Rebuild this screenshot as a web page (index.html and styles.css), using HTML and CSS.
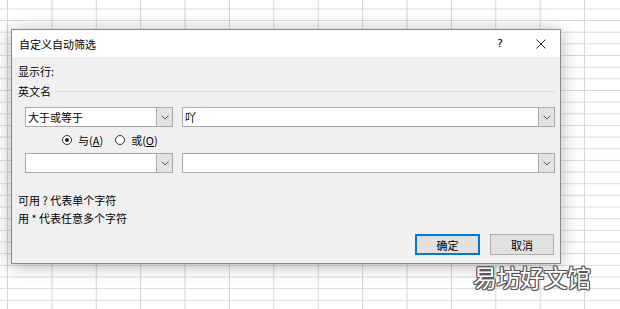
FILE: index.html
```html
<!DOCTYPE html>
<html lang="zh-CN">

<head>
    <meta charset="UTF-8">
    <meta name="viewport" content="width=device-width, initial-scale=1.0">
    <title>自定义自动筛选</title>
    <link rel="stylesheet" href="styles.css">
</head>

<body>

    <div class="sheet">
        <div class="dialog">
            <div class="titlebar">
                <span class="title">自定义自动筛选</span>
                <span class="help">?</span>
                <span class="close">
                    <svg width="10" height="10" viewBox="0 0 10 10">
                        <path d="M0.5 0.5L9.5 9.5M9.5 0.5L0.5 9.5" stroke="#222" stroke-width="1" fill="none" />
                    </svg>
                </span>
            </div>

            <div class="content">
                <div class="label">显示行:</div>
                <div class="group">
                    <span>英文名</span>
                    <span class="rule"></span>
                </div>

                <div class="row">
                    <div class="combo op">
                        <span class="value">大于或等于</span>
                        <span class="drop"><svg width="8" height="5" viewBox="0 0 8 5"><path d="M0.5 0.5L4 4L7.5 0.5" stroke="#555" fill="none" /></svg></span>
                    </div>
                    <div class="combo val">
                        <span class="value">吖</span>
                        <span class="drop"><svg width="8" height="5" viewBox="0 0 8 5"><path d="M0.5 0.5L4 4L7.5 0.5" stroke="#555" fill="none" /></svg></span>
                    </div>
                </div>

                <div class="radios">
                    <span class="radio checked"></span>
                    <span class="opt">与(<u>A</u>)</span>
                    <span class="radio"></span>
                    <span class="opt">或(<u>O</u>)</span>
                </div>

                <div class="row">
                    <div class="combo op">
                        <span class="value"></span>
                        <span class="drop"><svg width="8" height="5" viewBox="0 0 8 5"><path d="M0.5 0.5L4 4L7.5 0.5" stroke="#555" fill="none" /></svg></span>
                    </div>
                    <div class="combo val">
                        <span class="value"></span>
                        <span class="drop"><svg width="8" height="5" viewBox="0 0 8 5"><path d="M0.5 0.5L4 4L7.5 0.5" stroke="#555" fill="none" /></svg></span>
                    </div>
                </div>

                <div class="hint first">可用 ? 代表单个字符</div>
                <div class="hint">用 * 代表任意多个字符</div>

                <div class="buttons">
                    <button class="btn default">确定</button>
                    <button class="btn">取消</button>
                </div>
            </div>
        </div>

        <div class="watermark">易坊好文馆</div>
    </div>

</body>

</html>
```

FILE: styles.css
```css
html, body {
    margin: 0;
    padding: 0;
}

body {
    font-family: "Noto Sans CJK SC", "Noto Sans", sans-serif;
    font-size: 11px;
    color: #000;
}

.sheet {
    position: relative;
    width: 620px;
    height: 309px;
    overflow: hidden;
    padding: 29px 0 0 11px;
    box-sizing: border-box;
    background-color: #fff;
    background-image:
        linear-gradient(to right, #d4d4d4 1px, transparent 1px),
        linear-gradient(to bottom, #d9d9d9 1px, transparent 1px);
    background-size: 44.4px 100%, 100% 11.67px;
    background-position: 7px 0, 0 8.4px;
}

.dialog {
    width: 548px;
    border: 1px solid #8a8a8a;
    background-color: #f0f0f0;
    box-shadow: 0 2px 16px rgba(0, 0, 0, 0.3);
}

.titlebar {
    display: flex;
    align-items: center;
    height: 27px;
    background-color: #fff;
}

.title {
    flex: 1;
    padding-left: 7px;
    font-size: 11px;
}

.help {
    width: 20px;
    text-align: center;
    font-family: "DejaVu Sans", sans-serif;
    font-size: 11px;
}

.close {
    display: flex;
    justify-content: center;
    width: 30px;
    margin-left: 16px;
    margin-right: 4px;
}

.content {
    padding: 7px 5px 8px 6px;
}

.label,
.group,
.hint {
    line-height: 14px;
    height: 14px;
}

.group {
    display: flex;
    align-items: center;
    margin-top: 6px;
}

.rule {
    flex: 1;
    height: 1px;
    margin-left: 4px;
    background-color: #dcdcdc;
}

.row {
    display: flex;
    gap: 9px;
    margin-top: 9px;
    margin-left: 7px;
}

.row + .radios {
    margin-top: 6px;
}

.radios + .row {
    margin-top: 6px;
}

.combo {
    display: flex;
    height: 20px;
    box-sizing: border-box;
    border: 1px solid #a9a9a9;
    background-color: #fff;
}

.combo.op {
    width: 148px;
}

.combo.val {
    flex: 1;
}

.value {
    flex: 1;
    padding-left: 2px;
    line-height: 18px;
}

.drop {
    display: flex;
    align-items: center;
    justify-content: center;
    width: 15px;
    border-left: 1px solid #a9a9a9;
    background-color: #e3e3e3;
}

.radios {
    display: flex;
    align-items: center;
    height: 14px;
    padding-left: 44px;
}

.radio {
    display: flex;
    align-items: center;
    justify-content: center;
    width: 10px;
    height: 10px;
    box-sizing: border-box;
    border: 1px solid #333;
    border-radius: 50%;
    background-color: #fff;
}

.radio.checked::after {
    content: "";
    width: 4px;
    height: 4px;
    border-radius: 50%;
    background-color: #222;
}

.opt {
    margin-left: 6px;
    margin-right: 12px;
}

.hint.first {
    margin-top: 20px;
}

.hint + .hint {
    margin-top: 4px;
}

.buttons {
    display: flex;
    justify-content: flex-end;
    gap: 10px;
    margin-top: 9px;
    margin-right: 1px;
}

.btn {
    width: 64px;
    height: 21px;
    padding: 0;
    font-family: inherit;
    font-size: 11px;
    color: #000;
    background-color: #e1e1e1;
    border: 1px solid #adadad;
}

.btn.default {
    width: 65px;
    border: 2px solid #0078d7;
}

.watermark {
    position: absolute;
    left: 473px;
    top: 262px;
    font-size: 24px;
    line-height: 30px;
    color: #fff;
    letter-spacing: -0.5px;
    text-shadow:
        1px 0 0 #555, -1px 0 0 #555, 0 1px 0 #555, 0 -1px 0 #555,
        1px 1px 0 #555, -1px -1px 0 #555, 1px -1px 0 #555, -1px 1px 0 #555;
}
```
